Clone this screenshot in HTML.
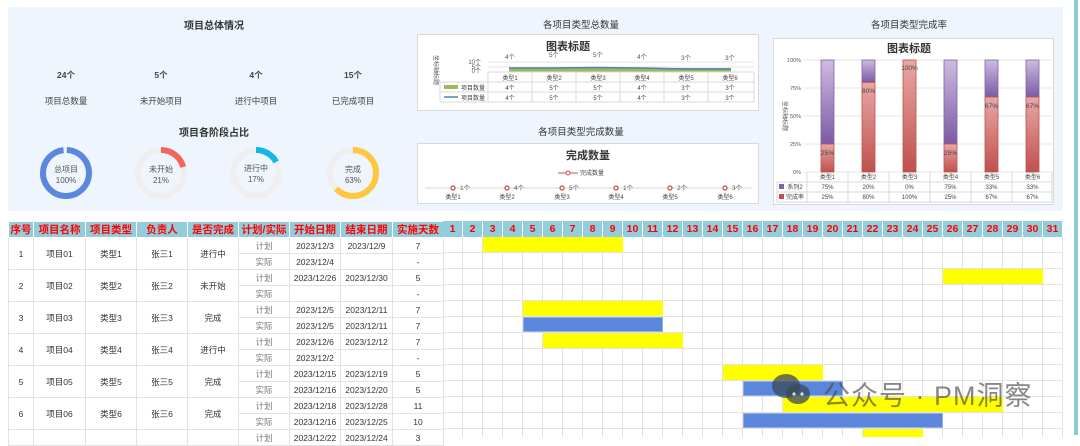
<!DOCTYPE html>
<html><head><meta charset="utf-8">
<style>
*{margin:0;padding:0;box-sizing:border-box}
body{width:1080px;height:435px;background:#fff;position:relative;overflow:hidden;font-family:"Liberation Sans","Noto Sans CJK SC",sans-serif;color:#333}
.a{position:absolute}
.c{position:absolute;text-align:center;transform:translateX(-50%);white-space:nowrap}
.panel{left:8px;top:7px;width:1055px;height:204px;background:#eef5fd}
.box{background:#fff;border:1px solid #d9d9d9}
.t11{font-size:10px;font-weight:bold;color:#333}
.s9{font-size:8.5px;color:#444}
table{border-collapse:collapse;table-layout:fixed;position:absolute;left:8px;top:221px}
td,th{border:1px solid #e2e2e2;text-align:center;font-size:8.5px;color:#333;height:16px;line-height:14px;padding:0;overflow:hidden;white-space:nowrap}
tr{height:16px}
th{background:#92cddc;color:#f00;font-size:10.5px;font-weight:bold;border:1px solid #fff}
td.g{color:#777}
</style></head><body>
<div class="a panel"></div>

<div class="c t11" style="left:214px;top:17px">项目总体情况</div>
<div class="c s9" style="left:66px;top:69px;font-weight:bold">24个</div>
<div class="c s9" style="left:161px;top:69px;font-weight:bold">5个</div>
<div class="c s9" style="left:256px;top:69px;font-weight:bold">4个</div>
<div class="c s9" style="left:353px;top:69px;font-weight:bold">15个</div>
<div class="c s9" style="left:66px;top:95px">项目总数量</div>
<div class="c s9" style="left:161px;top:95px">未开始项目</div>
<div class="c s9" style="left:256px;top:95px">进行中项目</div>
<div class="c s9" style="left:353px;top:95px">已完成项目</div>
<div class="c t11" style="left:214px;top:124px">项目各阶段占比</div>
<svg class="a" style="left:0;top:140px" width="410" height="70">
<g fill="none" stroke-width="6">
<circle cx="66" cy="33" r="23" stroke="#5b87dc" stroke-dasharray="141 4" transform="rotate(-88 66 33)"/>
<circle cx="161" cy="33" r="23" stroke="#efefef"/>
<circle cx="161" cy="33" r="23" stroke="#f4665c" stroke-dasharray="30 200" transform="rotate(-90 161 33)"/>
<circle cx="256" cy="33" r="23" stroke="#efefef"/>
<circle cx="256" cy="33" r="23" stroke="#17b6e6" stroke-dasharray="24.5 200" transform="rotate(-90 256 33)"/>
<circle cx="353" cy="33" r="23" stroke="#efefef"/>
<circle cx="353" cy="33" r="23" stroke="#fdc83f" stroke-dasharray="91 200" transform="rotate(-90 353 33)"/>
</g>
<g font-size="8" fill="#555" text-anchor="middle">
<text x="66" y="32">总项目</text><text x="66" y="43">100%</text>
<text x="161" y="32">未开始</text><text x="161" y="43">21%</text>
<text x="256" y="31">进行中</text><text x="256" y="42">17%</text>
<text x="353" y="32">完成</text><text x="353" y="43">63%</text>
</g></svg>

<div class="c t11" style="left:581px;top:17px;font-weight:normal;font-size:9.5px">各项目类型总数量</div>
<div class="a box" style="left:417px;top:34px;width:342px;height:77px"></div>
<svg class="a" style="left:417px;top:34px" width="342" height="77">
<text x="151" y="16" font-size="11" font-weight="bold" text-anchor="middle" fill="#333">图表标题</text>
<text transform="translate(17,36) rotate(90)" font-size="6" fill="#555" text-anchor="middle">坐标轴标题</text>
<g font-size="6" fill="#555" text-anchor="end"><text x="64" y="30">10个</text><text x="64" y="35">5个</text><text x="64" y="39">0个</text></g>
<line x1="71" y1="28" x2="337" y2="28" stroke="#e5e5e5"/><line x1="71" y1="33" x2="337" y2="33" stroke="#e5e5e5"/>
<rect x="92" y="34" width="222" height="4" fill="#9bbb59"/>
<polyline points="92,34 136,34 180,33.5 224,34 268,35 314,35" fill="none" stroke="#4f81bd" stroke-width="1.5"/>
<g font-size="6.5" fill="#555" text-anchor="middle">
<text x="93" y="25">4个</text><text x="137" y="23">5个</text><text x="181" y="23">5个</text><text x="225" y="25">4个</text><text x="269" y="26">3个</text><text x="313" y="26">3个</text>
</g>
<g stroke="#d9d9d9" fill="none"><path d="M71 38H337M23 48H337M23 58H337M23 68H337M23 48V68M71 38V68M115 38V68M159 38V68M203 38V68M247 38V68M291 38V68M337 38V68"/></g>
<rect x="27" y="51" width="14" height="4" fill="#9bbb59"/><line x1="27" y1="63" x2="41" y2="63" stroke="#4f81bd" stroke-width="1.5"/>
<g font-size="6" fill="#444" text-anchor="middle">
<text x="56" y="56">项目数量</text><text x="56" y="66">项目数量</text>
<text x="93" y="46">类型1</text><text x="137" y="46">类型2</text><text x="181" y="46">类型3</text><text x="225" y="46">类型4</text><text x="269" y="46">类型5</text><text x="313" y="46">类型6</text>
<text x="93" y="56">4个</text><text x="137" y="56">5个</text><text x="181" y="56">5个</text><text x="225" y="56">4个</text><text x="269" y="56">3个</text><text x="313" y="56">3个</text>
<text x="93" y="66">4个</text><text x="137" y="66">5个</text><text x="181" y="66">5个</text><text x="225" y="66">4个</text><text x="269" y="66">3个</text><text x="313" y="66">3个</text>
</g></svg>

<div class="c t11" style="left:581px;top:124px;font-weight:normal;font-size:9.5px">各项目类型完成数量</div>
<div class="a box" style="left:417px;top:143px;width:342px;height:61px"></div>
<svg class="a" style="left:417px;top:143px" width="342" height="61">
<text x="171" y="16" font-size="11" font-weight="bold" text-anchor="middle" fill="#333">完成数量</text>
<line x1="141" y1="30" x2="161" y2="30" stroke="#c0504d"/><circle cx="151" cy="30" r="2" fill="#fff" stroke="#c0504d"/>
<text x="163" y="32" font-size="6" fill="#444">完成数量</text>
<line x1="8" y1="45" x2="335" y2="45" stroke="#d9d9d9"/>
<g fill="#fff" stroke="#c0504d" stroke-width="1.3"><circle cx="36" cy="45" r="2"/><circle cx="90" cy="45" r="2"/><circle cx="145" cy="45" r="2"/><circle cx="199" cy="45" r="2"/><circle cx="253" cy="45" r="2"/><circle cx="308" cy="45" r="2"/></g>
<g font-size="6.5" fill="#555"><text x="43" y="47">1个</text><text x="97" y="47">4个</text><text x="152" y="47">5个</text><text x="206" y="47">1个</text><text x="260" y="47">2个</text><text x="315" y="47">3个</text></g>
<g font-size="6" fill="#444" text-anchor="middle"><text x="36" y="56">类型1</text><text x="90" y="56">类型2</text><text x="145" y="56">类型3</text><text x="199" y="56">类型4</text><text x="253" y="56">类型5</text><text x="308" y="56">类型6</text></g>
</svg>

<div class="c t11" style="left:909px;top:17px;font-weight:normal;font-size:9.5px">各项目类型完成率</div>
<div class="a box" style="left:773px;top:38px;width:281px;height:167px"></div>
<svg class="a" style="left:773px;top:38px" width="281" height="167">
<defs>
<linearGradient id="r" x1="0" y1="0" x2="0" y2="1"><stop offset="0" stop-color="#e8a8a6"/><stop offset="1" stop-color="#c0504d"/></linearGradient>
<linearGradient id="p" x1="0" y1="0" x2="0" y2="1"><stop offset="0" stop-color="#cdbbe0"/><stop offset="1" stop-color="#7b5aa6"/></linearGradient>
</defs>
<text x="136" y="14" font-size="11" font-weight="bold" text-anchor="middle" fill="#333">图表标题</text>
<g stroke="#e5e5e5"><path d="M31 22H279M31 50H279M31 78H279M31 106H279M31 134H279"/></g>
<g font-size="5.5" fill="#555" text-anchor="end"><text x="28" y="24">100%</text><text x="28" y="52">75%</text><text x="28" y="80">50%</text><text x="28" y="108">25%</text><text x="28" y="136">0%</text></g>
<text transform="translate(10,78) rotate(90)" font-size="6" fill="#555" text-anchor="middle">坐标轴标题</text>
<g stroke-width="0.8">
<rect x="48" y="22" width="13" height="84" fill="url(#p)" stroke="#8064a2"/><rect x="48" y="106" width="13" height="28" fill="url(#r)" stroke="#c0504d"/>
<rect x="89" y="22" width="13" height="22.4" fill="url(#p)" stroke="#8064a2"/><rect x="89" y="44.4" width="13" height="89.6" fill="url(#r)" stroke="#c0504d"/>
<rect x="130" y="22" width="13" height="112" fill="url(#r)" stroke="#c0504d"/>
<rect x="171" y="22" width="13" height="84" fill="url(#p)" stroke="#8064a2"/><rect x="171" y="106" width="13" height="28" fill="url(#r)" stroke="#c0504d"/>
<rect x="212" y="22" width="13" height="37" fill="url(#p)" stroke="#8064a2"/><rect x="212" y="59" width="13" height="75" fill="url(#r)" stroke="#c0504d"/>
<rect x="253" y="22" width="13" height="37" fill="url(#p)" stroke="#8064a2"/><rect x="253" y="59" width="13" height="75" fill="url(#r)" stroke="#c0504d"/>
</g>
<g font-size="6.5" fill="#444" text-anchor="middle"><text x="54.5" y="117">25%</text><text x="95.5" y="55">80%</text><text x="136.5" y="32">100%</text><text x="177.5" y="117">25%</text><text x="218.5" y="70">67%</text><text x="259.5" y="70">67%</text></g>
<g stroke="#d9d9d9" fill="none"><path d="M34 134V165M75 134V165M116 134V165M157 134V165M198 134V165M239 134V165M279 134V165M4 144H279M4 154H279M4 164H279M4 144V164"/></g>
<rect x="6" y="146" width="5" height="5" fill="#8064a2"/><rect x="6" y="156" width="5" height="5" fill="#c0504d"/>
<g font-size="6" fill="#444" text-anchor="middle">
<text x="22" y="151">系列2</text><text x="22" y="161">完成率</text>
<text x="54.5" y="141">类型1</text><text x="95.5" y="141">类型2</text><text x="136.5" y="141">类型3</text><text x="177.5" y="141">类型4</text><text x="218.5" y="141">类型5</text><text x="259.5" y="141">类型6</text>
<text x="54.5" y="151">75%</text><text x="95.5" y="151">20%</text><text x="136.5" y="151">0%</text><text x="177.5" y="151">75%</text><text x="218.5" y="151">33%</text><text x="259.5" y="151">33%</text>
<text x="54.5" y="161">25%</text><text x="95.5" y="161">80%</text><text x="136.5" y="161">100%</text><text x="177.5" y="161">25%</text><text x="218.5" y="161">67%</text><text x="259.5" y="161">67%</text>
</g></svg>

<div class="a" style="left:1074px;top:0;width:4px;height:435px;background:#8ccad8"></div>

<table style="width:435px">
<colgroup><col style="width:25px"><col style="width:52px"><col style="width:51px"><col style="width:51px"><col style="width:51px"><col style="width:51px"><col style="width:51px"><col style="width:52px"><col style="width:51px"></colgroup>
<tr><th>序号</th><th>项目名称</th><th>项目类型</th><th>负责人</th><th>是否完成</th><th>计划/实际</th><th>开始日期</th><th>结束日期</th><th>实施天数</th></tr>
<tr><td rowspan="2">1</td><td rowspan="2">项目01</td><td rowspan="2">类型1</td><td rowspan="2">张三1</td><td rowspan="2">进行中</td><td class="g">计划</td><td>2023/12/3</td><td>2023/12/9</td><td>7</td></tr>
<tr><td class="g">实际</td><td>2023/12/4</td><td></td><td>-</td></tr>
<tr><td rowspan="2">2</td><td rowspan="2">项目02</td><td rowspan="2">类型2</td><td rowspan="2">张三2</td><td rowspan="2">未开始</td><td class="g">计划</td><td>2023/12/26</td><td>2023/12/30</td><td>5</td></tr>
<tr><td class="g">实际</td><td></td><td></td><td>-</td></tr>
<tr><td rowspan="2">3</td><td rowspan="2">项目03</td><td rowspan="2">类型3</td><td rowspan="2">张三3</td><td rowspan="2">完成</td><td class="g">计划</td><td>2023/12/5</td><td>2023/12/11</td><td>7</td></tr>
<tr><td class="g">实际</td><td>2023/12/5</td><td>2023/12/11</td><td>7</td></tr>
<tr><td rowspan="2">4</td><td rowspan="2">项目04</td><td rowspan="2">类型4</td><td rowspan="2">张三4</td><td rowspan="2">进行中</td><td class="g">计划</td><td>2023/12/6</td><td>2023/12/12</td><td>7</td></tr>
<tr><td class="g">实际</td><td>2023/12/2</td><td></td><td>-</td></tr>
<tr><td rowspan="2">5</td><td rowspan="2">项目05</td><td rowspan="2">类型5</td><td rowspan="2">张三5</td><td rowspan="2">完成</td><td class="g">计划</td><td>2023/12/15</td><td>2023/12/19</td><td>5</td></tr>
<tr><td class="g">实际</td><td>2023/12/16</td><td>2023/12/20</td><td>5</td></tr>
<tr><td rowspan="2">6</td><td rowspan="2">项目06</td><td rowspan="2">类型6</td><td rowspan="2">张三6</td><td rowspan="2">完成</td><td class="g">计划</td><td>2023/12/18</td><td>2023/12/28</td><td>11</td></tr>
<tr><td class="g">实际</td><td>2023/12/16</td><td>2023/12/25</td><td>10</td></tr>
<tr><td rowspan="2"></td><td rowspan="2"></td><td rowspan="2"></td><td rowspan="2"></td><td rowspan="2"></td><td class="g">计划</td><td>2023/12/22</td><td>2023/12/24</td><td>3</td></tr>
</table>

<div class="a" style="left:443px;top:221px;width:620px;height:16px;display:grid;grid-template-columns:repeat(31,20px);font-size:10.5px;font-weight:bold;color:#f00;text-align:center;line-height:16px">
<span style="background:#92cddc;border-right:1px solid #fff">1</span><span style="background:#92cddc;border-right:1px solid #fff">2</span><span style="background:#92cddc;border-right:1px solid #fff">3</span><span style="background:#92cddc;border-right:1px solid #fff">4</span><span style="background:#92cddc;border-right:1px solid #fff">5</span><span style="background:#92cddc;border-right:1px solid #fff">6</span><span style="background:#92cddc;border-right:1px solid #fff">7</span><span style="background:#92cddc;border-right:1px solid #fff">8</span><span style="background:#92cddc;border-right:1px solid #fff">9</span><span style="background:#92cddc;border-right:1px solid #fff">10</span><span style="background:#92cddc;border-right:1px solid #fff">11</span><span style="background:#92cddc;border-right:1px solid #fff">12</span><span style="background:#92cddc;border-right:1px solid #fff">13</span><span style="background:#92cddc;border-right:1px solid #fff">14</span><span style="background:#92cddc;border-right:1px solid #fff">15</span><span style="background:#92cddc;border-right:1px solid #fff">16</span><span style="background:#92cddc;border-right:1px solid #fff">17</span><span style="background:#92cddc;border-right:1px solid #fff">18</span><span style="background:#92cddc;border-right:1px solid #fff">19</span><span style="background:#92cddc;border-right:1px solid #fff">20</span><span style="background:#92cddc;border-right:1px solid #fff">21</span><span style="background:#92cddc;border-right:1px solid #fff">22</span><span style="background:#92cddc;border-right:1px solid #fff">23</span><span style="background:#92cddc;border-right:1px solid #fff">24</span><span style="background:#92cddc;border-right:1px solid #fff">25</span><span style="background:#92cddc;border-right:1px solid #fff">26</span><span style="background:#92cddc;border-right:1px solid #fff">27</span><span style="background:#92cddc;border-right:1px solid #fff">28</span><span style="background:#92cddc;border-right:1px solid #fff">29</span><span style="background:#92cddc;border-right:1px solid #fff">30</span><span style="background:#92cddc;border-right:1px solid #fff">31</span>
</div>
<div class="a" style="left:443px;top:237px;width:620px;height:200px;background-image:repeating-linear-gradient(to right,transparent 0 19px,#e2e2e2 19px 20px),repeating-linear-gradient(to bottom,transparent 0 15px,#e2e2e2 15px 16px)"></div>
<!-- bars: x=443+(d-1)*20 ; y=237+row*16 -->
<div class="a" style="background:#ffff00;left:483px;top:237px;width:140px;height:15px"></div>
<div class="a" style="background:#ffff00;left:943px;top:269px;width:100px;height:15px"></div>
<div class="a" style="background:#ffff00;left:523px;top:301px;width:140px;height:15px"></div>
<div class="a" style="background:#5a86dc;left:523px;top:317px;width:140px;height:15px;border:1px solid #8fb0ea"></div>
<div class="a" style="background:#ffff00;left:543px;top:333px;width:140px;height:15px"></div>
<div class="a" style="background:#ffff00;left:723px;top:365px;width:100px;height:15px"></div>
<div class="a" style="background:#5a86dc;left:743px;top:381px;width:100px;height:15px;border:1px solid #8fb0ea"></div>
<div class="a" style="background:#ffff00;left:783px;top:397px;width:220px;height:15px"></div>
<div class="a" style="background:#5a86dc;left:743px;top:413px;width:200px;height:15px;border:1px solid #8fb0ea"></div>
<div class="a" style="background:#ffff00;left:863px;top:429px;width:60px;height:8px"></div>

<svg class="a" style="left:770px;top:372px" width="45" height="36">
<ellipse cx="16" cy="14" rx="14" ry="12" fill="#3a4a5a" opacity="0.75"/>
<ellipse cx="28" cy="22" rx="12" ry="10" fill="#3a4a5a" opacity="0.75"/>
<circle cx="24" cy="22" r="1.6" fill="#ddd"/><circle cx="32" cy="22" r="1.6" fill="#ddd"/>
</svg>
<div class="a" style="left:823px;top:374px;font-size:27px;color:rgba(70,70,70,0.65);white-space:nowrap;letter-spacing:1px">公众号 · PM洞察</div>
</body></html>
